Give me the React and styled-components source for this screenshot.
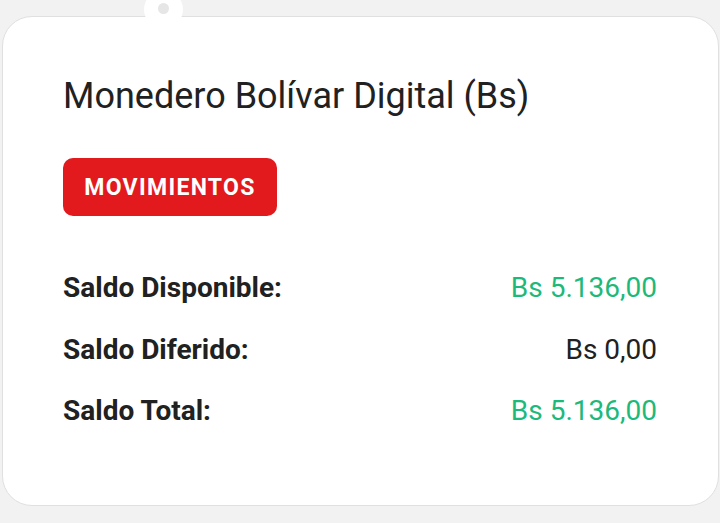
import React from "react";
import styled, { createGlobalStyle } from "styled-components";

const Global = createGlobalStyle`
  html, body { margin: 0; padding: 0; background: #f2f2f2; }
  body { font-family: Roboto, "Noto Sans", sans-serif; }
  #root { width: 720px; height: 523px; overflow: hidden; }
`;

const Page = styled.div`
  width: 720px;
  height: 523px;
  box-sizing: border-box;
  padding: 16px 1px 17px 2px;
  background: #f2f2f2;
  position: relative;
`;

const Tab = styled.div`
  position: absolute;
  left: 144px;
  top: -10px;
  width: 39px;
  height: 39px;
  border-radius: 50%;
  background: #ffffff;
  z-index: 2;
  &::after {
    content: "";
    position: absolute;
    left: 14px;
    top: 13px;
    width: 11px;
    height: 11px;
    border-radius: 50%;
    background: #e6e6e6;
  }
`;

const Card = styled.div`
  height: 100%;
  box-sizing: border-box;
  background: #ffffff;
  border: 1.5px solid #e0e0e0;
  border-radius: 30px;
  padding: 57px 61px 0 60px;
  display: flex;
  flex-direction: column;
`;

const Title = styled.h1`
  margin: 0;
  font-family: Roboto, sans-serif;
  font-weight: 400;
  font-size: 36px;
  line-height: 44px;
  color: #212121;
`;

const Button = styled.button`
  align-self: flex-start;
  margin-top: 40px;
  width: 214px;
  height: 58px;
  padding: 0;
  border: none;
  border-radius: 10px;
  background: #e2191d;
  color: #ffffff;
  font-family: Roboto, sans-serif;
  font-weight: 700;
  font-size: 23px;
  letter-spacing: 1.3px;
  cursor: pointer;
`;

const List = styled.div`
  margin-top: 55px;
  display: flex;
  flex-direction: column;
  gap: 27.5px;
`;

const Row = styled.div`
  display: flex;
  justify-content: space-between;
  align-items: baseline;
  font-family: Roboto, sans-serif;
  font-size: 28px;
  line-height: 34px;
`;

const Label = styled.span`
  font-weight: 700;
  color: #212121;
`;

const Value = styled.span`
  font-weight: 400;
  color: ${(p) => (p.$green ? "#1db97a" : "#212121")};
`;

const rows = [
  { label: "Saldo Disponible:", value: "Bs 5.136,00", green: true },
  { label: "Saldo Diferido:", value: "Bs 0,00", green: false },
  { label: "Saldo Total:", value: "Bs 5.136,00", green: true },
];

export default function App() {
  return (
    <>
      <Global />
      <Page>
        <Tab />
        <Card>
          <Title>Monedero Bolívar Digital (Bs)</Title>
          <Button>MOVIMIENTOS</Button>
          <List>
            {rows.map((r) => (
              <Row key={r.label}>
                <Label>{r.label}</Label>
                <Value $green={r.green}>{r.value}</Value>
              </Row>
            ))}
          </List>
        </Card>
      </Page>
    </>
  );
}
